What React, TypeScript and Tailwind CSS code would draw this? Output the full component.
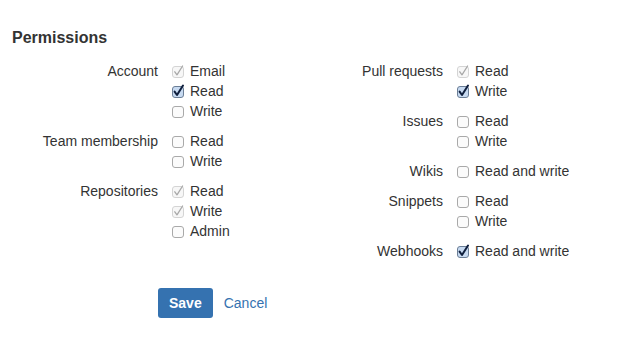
import React from "react";

type State = "off" | "on" | "disabled";

function Box({ state }: { state: State }) {
  return (
    <svg width="14" height="14" viewBox="0 0 14 14" className="shrink-0">
      {state === "on" ? (
        <>
          <rect x="1.5" y="2.5" width="11" height="11" rx="2.5" fill="#c7daf1" stroke="#6b7e96" />
          <path d="M3.6 7.6 L6 11 L12 1.5" fill="none" stroke="#0f1f3d" strokeWidth="2" strokeLinecap="round" strokeLinejoin="round" />
        </>
      ) : state === "disabled" ? (
        <>
          <rect x="1.5" y="2.5" width="11" height="11" rx="2.5" fill="#f7f7f7" stroke="#d4d4d4" />
          <path d="M3.8 7.8 L6 10.8 L11.6 2" fill="none" stroke="#a8a8a8" strokeWidth="1.3" strokeLinecap="round" strokeLinejoin="round" />
        </>
      ) : (
        <rect x="1.5" y="2.5" width="11" height="11" rx="2.5" fill="#fbfbfb" stroke="#a9a9a9" />
      )}
    </svg>
  );
}

type Group = { label: string; opts: [string, State][] };

const left: Group[] = [
  { label: "Account", opts: [["Email", "disabled"], ["Read", "on"], ["Write", "off"]] },
  { label: "Team membership", opts: [["Read", "off"], ["Write", "off"]] },
  { label: "Repositories", opts: [["Read", "disabled"], ["Write", "disabled"], ["Admin", "off"]] },
];
const right: Group[] = [
  { label: "Pull requests", opts: [["Read", "disabled"], ["Write", "on"]] },
  { label: "Issues", opts: [["Read", "off"], ["Write", "off"]] },
  { label: "Wikis", opts: [["Read and write", "off"]] },
  { label: "Snippets", opts: [["Read", "off"], ["Write", "off"]] },
  { label: "Webhooks", opts: [["Read and write", "on"]] },
];

function Column({ groups, className }: { groups: Group[]; className: string }) {
  return (
    <div className={"flex flex-col gap-[10px] " + className}>
      {groups.map((g) => (
        <div key={g.label} className="flex">
          <div className="w-[146px] text-right leading-[20px] pr-0">{g.label}</div>
          <div className="flex flex-col ml-[13px]">
            {g.opts.map(([t, s]) => (
              <div key={t} className="flex items-center h-[20px]">
                <Box state={s} />
                <span className="ml-[5px]">{t}</span>
              </div>
            ))}
          </div>
        </div>
      ))}
    </div>
  );
}

export default function App() {
  return (
    <div
      className="w-[624px] h-[355px] bg-white text-[#333333] text-[14px]"
      style={{ fontFamily: '"Liberation Sans", Arial, sans-serif' }}
    >
      <div className="pl-[12px] pt-[28px]">
        <h2 className="text-[16px] font-bold leading-[20px] text-[#333333]">Permissions</h2>
        <div className="flex mt-[13px]">
          <Column groups={left} className="w-[285px]" />
          <Column groups={right} className="" />
        </div>
        <div className="flex items-center mt-[27px] ml-[146px]">
          <button className="h-[30px] px-[11px] rounded-[3px] bg-[#3572b0] text-white font-bold text-[14px]">
            Save
          </button>
          <a className="ml-[11px] text-[#3572b0]">Cancel</a>
        </div>
      </div>
    </div>
  );
}
